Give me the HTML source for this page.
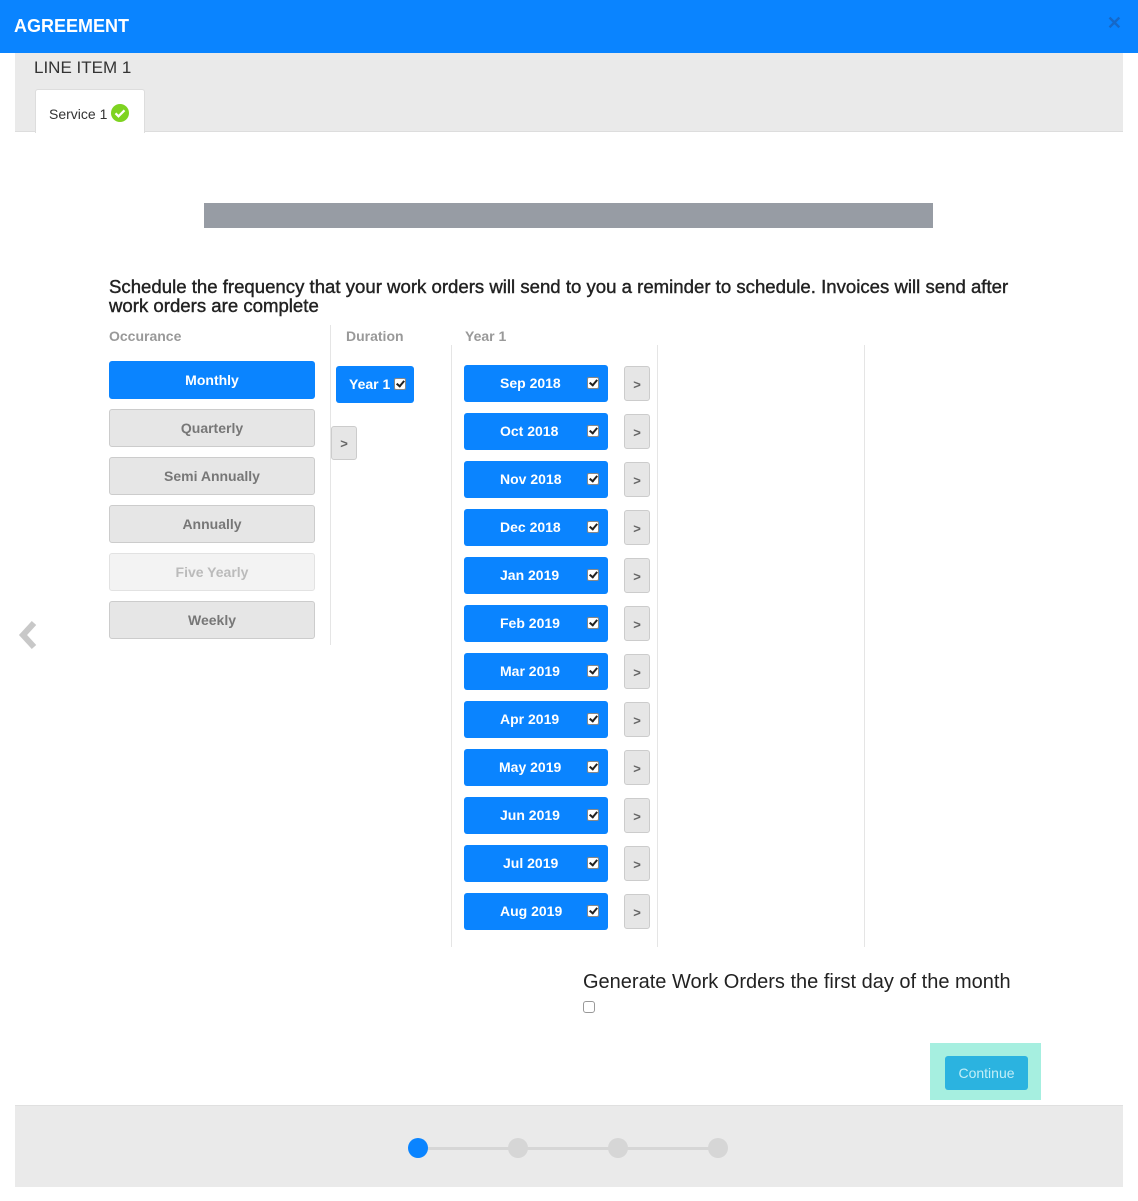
<!DOCTYPE html>
<html><head><meta charset="utf-8"><style>
*{box-sizing:border-box;margin:0;padding:0}
body{width:1138px;height:1201px;background:#fff;font-family:"Liberation Sans",sans-serif;position:relative;overflow:hidden}
.a{position:absolute}
.hdr{left:0;top:0;width:1138px;height:53px;background:#0a84ff;color:#fff;font-weight:bold;font-size:18px;padding:16px 0 0 14px}
.x{right:16px;top:13px;color:#1568c9;font-size:18px;font-weight:bold}
.gp{left:15px;top:53px;width:1108px;height:79px;background:#eaeaea;border-bottom:1px solid #ddd}
.tab{left:35px;top:89px;width:110px;height:44px;background:#fff;border:1px solid #ddd;border-bottom:none;border-radius:3px 3px 0 0;font-size:14px;color:#333;padding:14px 0 0 13px}
.chk{display:inline-block;width:18px;height:18px;border-radius:50%;background:#7ed321;vertical-align:-3px;margin-left:0px;position:relative}
.bar{left:204px;top:203px;width:729px;height:25px;background:#979ca4}
.h{left:109px;top:277px;width:925px;font-size:18.6px;line-height:19px;color:#222;-webkit-text-stroke:0.4px #222}
.lbl{font-size:14px;font-weight:bold;color:#999;top:328px}
.vl{width:1px;background:#e5e5e5}
.ob{left:109px;width:206px;height:38px;border:1px solid #ccc;border-radius:3px;background:#e6e6e6;color:#777;font-weight:bold;font-size:14px;text-align:center;line-height:36px}
.blue{background:#0a84ff;border-color:#0a84ff;color:#fff}
.mb{left:464px;width:144px;height:37px;background:#0a84ff;border-radius:3px;color:#fff;font-weight:bold;font-size:14px;line-height:37px;padding-left:36px}
.cb{position:absolute;right:9px;top:12px;width:12px;height:12px;background:#fff;border-radius:2px;border:1px solid #888}
.cb:after{content:"";position:absolute;left:3px;top:0px;width:3px;height:6px;border:solid #222;border-width:0 2px 2px 0;transform:rotate(40deg)}
.gb{width:26px;height:35px;border:1px solid #ccc;border-radius:3px;background:#e6e6e6;color:#666;font-size:13px;text-align:center;line-height:35px;font-weight:bold}
</style></head><body>
<div class="a hdr">AGREEMENT</div>
<div class="a x">✕</div>
<div class="a gp"></div>
<div class="a" style="left:34px;top:58px;font-size:17px;color:#333">LINE ITEM 1</div>
<div class="a tab">Service 1 <span class="chk"><svg width="18" height="18" viewBox="0 0 18 18" style="position:absolute;left:0;top:0"><path d="M4.5 9.3l3 3 6-6" fill="none" stroke="#fff" stroke-width="2.2"/></svg></span></div>
<div class="a bar"></div>
<div class="a h">Schedule the frequency that your work orders will send to you a reminder to schedule. Invoices will send after work orders are complete</div>
<div class="a lbl" style="left:109px">Occurance</div>
<div class="a lbl" style="left:346px">Duration</div>
<div class="a lbl" style="left:465px">Year 1</div>
<div class="a vl" style="left:330px;top:325px;height:320px"></div>
<div class="a vl" style="left:451px;top:345px;height:602px"></div>
<div class="a vl" style="left:657px;top:345px;height:602px"></div>
<div class="a vl" style="left:864px;top:345px;height:602px"></div>
<div class="a ob blue" style="top:361px">Monthly</div>
<div class="a ob" style="top:409px">Quarterly</div>
<div class="a ob" style="top:457px">Semi Annually</div>
<div class="a ob" style="top:505px">Annually</div>
<div class="a ob" style="top:553px;background:#f3f3f3;border-color:#e2e2e2;color:#bbb">Five Yearly</div>
<div class="a ob" style="top:601px">Weekly</div>
<svg class="a" style="left:16px;top:619px" width="24" height="32" viewBox="0 0 24 32"><path d="M18 4L7 16l11 12" fill="none" stroke="#c8c8c8" stroke-width="6"/></svg>
<div class="a mb" style="left:336px;top:366px;width:78px;height:37px;padding-left:13px">Year 1<span class="cb" style="right:8px"></span></div>
<div class="a gb" style="left:331px;top:426px;height:34px;line-height:34px">&gt;</div>
<div class="a mb" style="top:365px">Sep 2018<span class="cb"></span></div><div class="a gb" style="left:624px;top:366px">&gt;</div>
<div class="a mb" style="top:413px">Oct 2018<span class="cb"></span></div><div class="a gb" style="left:624px;top:414px">&gt;</div>
<div class="a mb" style="top:461px">Nov 2018<span class="cb"></span></div><div class="a gb" style="left:624px;top:462px">&gt;</div>
<div class="a mb" style="top:509px">Dec 2018<span class="cb"></span></div><div class="a gb" style="left:624px;top:510px">&gt;</div>
<div class="a mb" style="top:557px">Jan 2019<span class="cb"></span></div><div class="a gb" style="left:624px;top:558px">&gt;</div>
<div class="a mb" style="top:605px">Feb 2019<span class="cb"></span></div><div class="a gb" style="left:624px;top:606px">&gt;</div>
<div class="a mb" style="top:653px">Mar 2019<span class="cb"></span></div><div class="a gb" style="left:624px;top:654px">&gt;</div>
<div class="a mb" style="top:701px">Apr 2019<span class="cb"></span></div><div class="a gb" style="left:624px;top:702px">&gt;</div>
<div class="a mb" style="top:749px;padding-left:35px">May 2019<span class="cb"></span></div><div class="a gb" style="left:624px;top:750px">&gt;</div>
<div class="a mb" style="top:797px">Jun 2019<span class="cb"></span></div><div class="a gb" style="left:624px;top:798px">&gt;</div>
<div class="a mb" style="top:845px;padding-left:39px">Jul 2019<span class="cb"></span></div><div class="a gb" style="left:624px;top:846px">&gt;</div>
<div class="a mb" style="top:893px">Aug 2019<span class="cb"></span></div><div class="a gb" style="left:624px;top:894px">&gt;</div>
<div class="a" style="left:583px;top:971px;font-size:20px;color:#222">Generate Work Orders the first day of the month</div>
<div class="a" style="left:583px;top:1001px;width:12px;height:12px;border:1px solid #999;border-radius:3px;background:#fff"></div>
<div class="a" style="left:930px;top:1043px;width:111px;height:57px;background:#a6efe0"></div>
<div class="a" style="left:945px;top:1056px;width:83px;height:34px;background:#2bb3e0;border-radius:3px;color:#c2eef7;font-size:14px;text-align:center;line-height:34px">Continue</div>
<div class="a" style="left:15px;top:1105px;width:1108px;height:82px;background:#eaeaea;border-top:1px solid #e0e0e0"></div>
<div class="a" style="left:418px;top:1147px;width:300px;height:3px;background:#d6d6d6"></div>
<div class="a" style="left:408px;top:1138px;width:20px;height:20px;border-radius:50%;background:#0a84ff"></div>
<div class="a" style="left:508px;top:1138px;width:20px;height:20px;border-radius:50%;background:#d6d6d6"></div>
<div class="a" style="left:608px;top:1138px;width:20px;height:20px;border-radius:50%;background:#d6d6d6"></div>
<div class="a" style="left:708px;top:1138px;width:20px;height:20px;border-radius:50%;background:#d6d6d6"></div>
</body></html>
